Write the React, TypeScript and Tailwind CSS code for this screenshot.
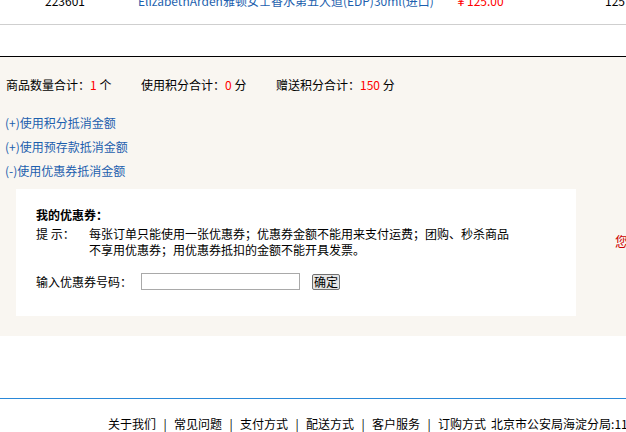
import React from 'react';

const font = 'font-["Noto_Sans_CJK_SC",sans-serif]';

const footerLinks = ['关于我们', '常见问题', '支付方式', '配送方式', '客户服务', '订购方式'];

export default function App() {
  return (
    <div className={`w-[626px] h-[432px] overflow-hidden bg-white text-[12px] text-black ${font}`}>
      {/* order row, scrolled mostly out of view */}
      <div className="h-[25px] border-b border-[#cfcfcf] overflow-hidden">
        <div className="flex -mt-[5px] leading-[12px] whitespace-nowrap">
          <span className="w-[138px] shrink-0 pl-[45px]">223601</span>
          <span className="w-[317px] shrink-0 text-[#1d5fae]">ElizabethArden雅顿女士香水第五大道(EDP)30ml(进口)</span>
          <span className="w-[150px] shrink-0 text-[#ff0000]">￥125.00</span>
          <span className="shrink-0">125</span>
        </div>
      </div>
      <div className="h-[32px] border-b border-black" />

      {/* totals and discounts */}
      <div className="bg-[#f9f6f1] h-[279px] pt-[16px]">
        <div className="flex h-[24px] leading-[24px] pl-[6px]">
          <span className="w-[135px]">
            商品数量合计：<span className="text-[#ff0000]">1</span> 个
          </span>
          <span className="w-[135px]">
            使用积分合计：<span className="text-[#ff0000]">0</span> 分
          </span>
          <span>
            赠送积分合计：<span className="text-[#ff0000]">150</span> 分
          </span>
        </div>

        <div className="mt-[14px] pl-[5px] text-[#1d5fae]">
          <div className="h-[24px] leading-[24px]">(+)使用积分抵消金额</div>
          <div className="h-[24px] leading-[24px]">(+)使用预存款抵消金额</div>
          <div className="h-[24px] leading-[24px]">(-)使用优惠券抵消金额</div>
        </div>

        <div className="flex items-start mt-[6px]">
          <div className="ml-[16px] w-[560px] shrink-0 h-[127px] bg-white pl-[20px] pt-[18px] leading-[16px]">
            <div className="font-bold">我的优惠券：</div>
            <div className="flex mt-[3px]">
              <span className="w-[53px] shrink-0">提 示：</span>
              <p className="w-[422px]">
                每张订单只能使用一张优惠券；优惠券金额不能用来支付运费；团购、秒杀商品不享用优惠券；用优惠券抵扣的金额不能开具发票。
              </p>
            </div>
            <div className="flex items-center mt-[15px]">
              <span className="w-[105px]">输入优惠券号码：</span>
              <input
                type="text"
                className="w-[159px] h-[17px] border border-[#a9a9a9] bg-white outline-none"
              />
              <button className="ml-[12px] h-[16px] px-[1px] leading-[12px] border border-[#707070] rounded-[2px] bg-[#e6e6e6] text-[12px]">
                确定
              </button>
            </div>
          </div>
          <span className="ml-[39px] mt-[44px] leading-[16px] text-[13px] text-[#cc0000] whitespace-nowrap">您</span>
        </div>
      </div>

      <div className="h-[62px]" />

      {/* footer */}
      <div className="border-t border-[#2a88d8] pt-[19px] pl-[108px] leading-[12px] whitespace-nowrap flex">
        {footerLinks.map((l, i) => (
          <React.Fragment key={l}>
            {i > 0 && <span className="w-[18px] shrink-0 text-center">|</span>}
            <span className="shrink-0">{l}</span>
          </React.Fragment>
        ))}
        <span className="ml-[5px] shrink-0">北京市公安局海淀分局:11010802010001</span>
      </div>
    </div>
  );
}
